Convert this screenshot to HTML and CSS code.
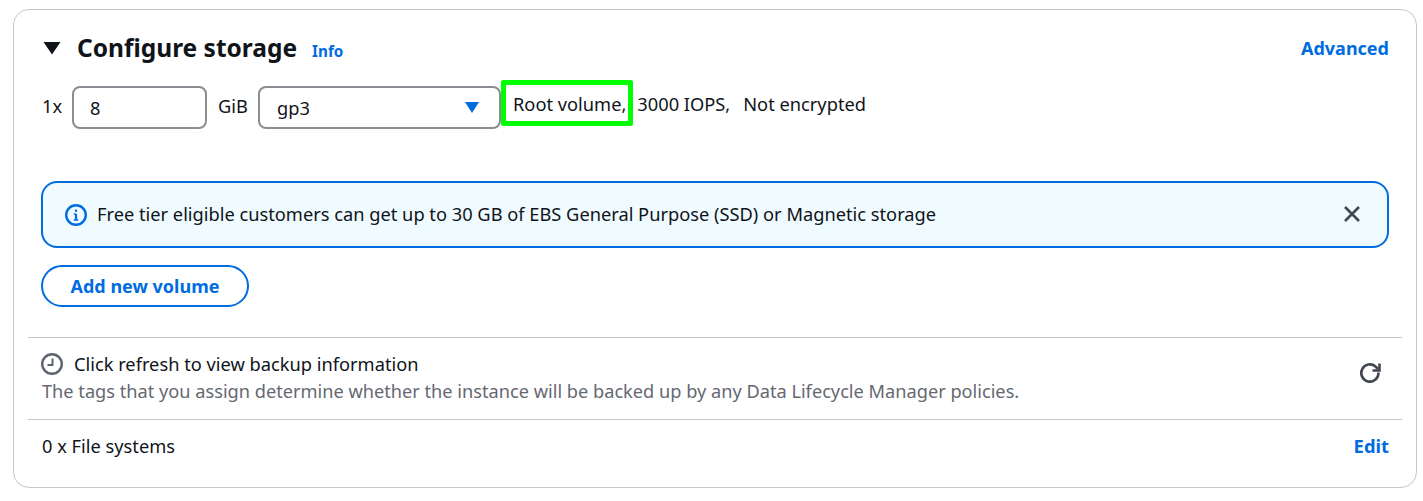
FILE: index.html
```html
<!DOCTYPE html>
<html lang="en">
<head>
<meta charset="utf-8">
<title>Configure storage</title>
<link rel="stylesheet" href="styles.css">
</head>
<body>
<section class="card">
  <div class="main">
    <header class="head">
      <div class="title-group">
        <svg class="caret" viewBox="0 0 18 14" aria-hidden="true"><path d="M0.5 1h17L9 13.5z"/></svg>
        <h2 class="title">Configure storage</h2>
        <a class="info">Info</a>
      </div>
      <a class="link">Advanced</a>
    </header>
    <div class="volume">
      <span class="mult">1x</span>
      <div class="field size">8</div>
      <span class="unit">GiB</span>
      <div class="field type">
        <span>gp3</span>
        <svg class="select-caret" viewBox="0 0 14 11" aria-hidden="true"><path d="M0 0h14L7 11z"/></svg>
      </div>
      <div class="desc">
        <span class="highlighted">Root volume,<span class="marker"></span></span>
        <span class="iops">3000 IOPS,</span>
        <span class="enc">Not encrypted</span>
      </div>
    </div>
    <div class="alert">
      <svg class="alert-icon" viewBox="0 0 22 22" aria-hidden="true">
        <circle cx="11" cy="11" r="9.8" fill="none" stroke="#006ce0" stroke-width="2.4"/>
        <path d="M11 10v6" fill="none" stroke="#006ce0" stroke-width="2.2"/>
        <path d="M8.8 10H11M8.8 16h4.4" fill="none" stroke="#006ce0" stroke-width="1.4"/>
        <rect x="9.9" y="5.6" width="2.2" height="2.2" fill="#006ce0"/>
      </svg>
      <span class="alert-text">Free tier eligible customers can get up to 30 GB of EBS General Purpose (SSD) or Magnetic storage</span>
      <svg class="close" viewBox="0 0 18 18" aria-hidden="true"><path d="M2 2l14 14M16 2L2 16"/></svg>
    </div>
    <button class="add">Add new volume</button>
  </div>
  <div class="row backup">
    <div>
      <div class="backup-title">
        <svg class="clock" viewBox="0 0 22 22" aria-hidden="true">
          <circle cx="11" cy="11" r="9.8" fill="none" stroke="#5b6470" stroke-width="2.4"/>
          <path d="M11.5 5.5v6.5H6.5" fill="none" stroke="#5b6470" stroke-width="2"/>
        </svg>
        <span>Click refresh to view backup information</span>
      </div>
      <div class="note">The tags that you assign determine whether the instance will be backed up by any Data Lifecycle Manager policies.</div>
    </div>
    <svg class="refresh" viewBox="0 0 24 24" aria-hidden="true">
      <path d="M20.5 11.5v.5a8.6 8.6 0 1 1-3-6.5l2.5 2.5" fill="none" stroke="#424650" stroke-width="2.6"/>
      <path d="M21.5 2.5v7h-7" fill="none" stroke="#424650" stroke-width="2.6"/>
    </svg>
  </div>
  <div class="row files">
    <span class="files-label">0 x File systems</span>
    <a class="link edit">Edit</a>
  </div>
</section>
</body>
</html>
```
FILE: styles.css
```css
* { box-sizing: border-box; }
html, body { margin: 0; background: #fff; }
body {
  height: 501px;
  padding: 9px 6px 0 13px;
  font-family: "Noto Sans", "Open Sans", sans-serif;
  font-size: 18.25px;
  color: #0f141a;
}
.card {
  height: 479px;
  border: 1px solid #c6c6cd;
  border-radius: 16px;
  padding: 0 14px;
}
.main { padding: 0 13px; height: 327px; }
.head {
  display: flex;
  justify-content: space-between;
  align-items: center;
  height: 76px;
}
.title-group { display: flex; align-items: center; }
.caret { width: 18px; height: 14px; fill: #0f141a; margin: 0 16px 0 2px; }
.title { margin: 0; font-size: 24.5px; font-weight: 700; line-height: 32px; }
.info { margin: 6px 0 0 15px; font-size: 15.2px; font-weight: 700; color: #006ce0; }
.link { font-weight: 700; font-size: 18px; color: #006ce0; }
.edit { font-size: 18.4px; }
.volume { display: flex; align-items: center; height: 43px; }
.mult { width: 31px; padding-left: 1px; position: relative; top: -2px; }
.field {
  height: 43px;
  border: 2px solid #8c8c94;
  border-radius: 8px;
  display: flex;
  align-items: center;
  background: #fff;
}
.size { width: 135px; padding-left: 16px; }
.unit { width: 51px; padding-left: 11px; position: relative; top: -2px; }
.type { width: 243px; padding: 0 20px 0 17px; justify-content: space-between; }
.select-caret { width: 14px; height: 11px; fill: #006ce0; }
.desc { display: flex; align-items: center; position: relative; top: -4px; margin-left: 12px; white-space: nowrap; }
.highlighted { position: relative; }
.marker {
  position: absolute;
  left: -12px;
  top: -11px;
  width: 132px;
  height: 46px;
  border: 5px solid #00ff00;
  border-radius: 2px;
}
.iops { margin-left: 11px; }
.enc { margin-left: 13px; }
.alert {
  margin-top: 52px;
  height: 67px;
  border: 2px solid #006ce0;
  border-radius: 16px;
  background: #f0fbff;
  display: flex;
  align-items: center;
  padding: 0 26px 0 22px;
}
.alert-icon { width: 22px; height: 22px; flex: none; }
.alert-text { margin-left: 10px; flex: 1; position: relative; top: -1px; }
.close { width: 18px; height: 18px; fill: none; stroke: #424650; stroke-width: 2.6; position: relative; top: -1px; }
.add {
  display: block;
  margin-top: 17px;
  width: 208px;
  height: 42px;
  border: 2px solid #006ce0;
  border-radius: 21px;
  background: #fff;
  color: #006ce0;
  font: 700 18px "Noto Sans", "Open Sans", sans-serif;
  padding: 0;
}
.row {
  display: flex;
  justify-content: space-between;
  align-items: center;
  border-top: 1px solid #c6c6cd;
  padding: 0 13px;
}
.backup { height: 82px; padding-bottom: 1px; }
.backup-title { display: flex; align-items: center; line-height: 26px; }
.clock { width: 22px; height: 22px; margin-right: 11px; }
.note { color: #656871; line-height: 28px; padding-left: 1px; font-size: 18.2px; }
.refresh { width: 24px; height: 24px; margin: 0 7px 11px 0; }
.files { height: 55px; padding-bottom: 3px; }
.files-label { padding-left: 1px; }
```
